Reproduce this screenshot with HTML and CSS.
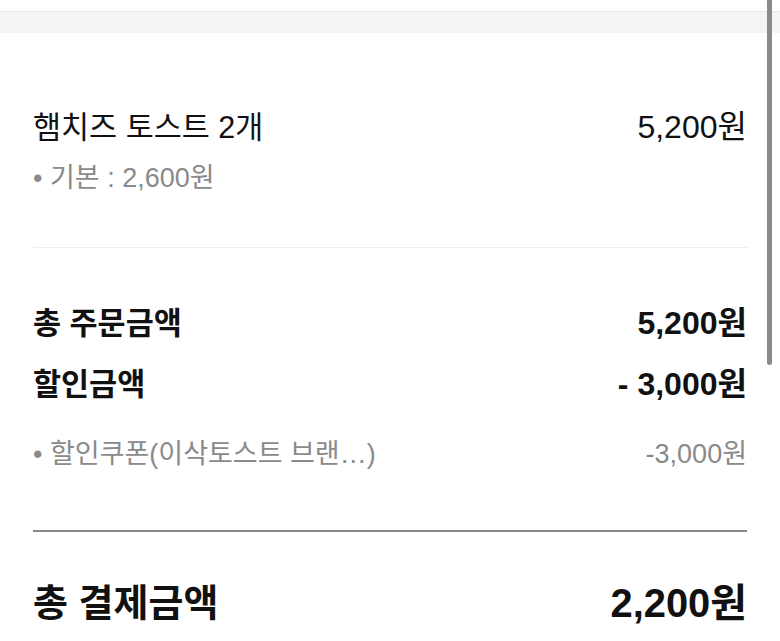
FILE: index.html
```html
<!DOCTYPE html>
<html lang="ko">
<head>
<meta charset="utf-8">
<link rel="stylesheet" href="styles.css">
</head>
<body>
<div class="topbar"></div>
<div class="band"></div>
<main class="content">
  <section class="item">
    <div class="row title-row">
      <span>햄치즈 토스트 2개</span>
      <span class="amt">5,200원</span>
    </div>
    <div class="row sub-row">
      <span>• 기본 : 2,600원</span>
    </div>
  </section>
  <hr class="light">
  <section class="summary">
    <div class="row bold-row first">
      <span>총 주문금액</span>
      <span class="amt">5,200원</span>
    </div>
    <div class="row bold-row second">
      <span>할인금액</span>
      <span class="amt">- 3,000원</span>
    </div>
    <div class="row sub-row coupon">
      <span>• 할인쿠폰(이삭토스트 브랜…)</span>
      <span>-3,000원</span>
    </div>
  </section>
  <hr class="dark">
  <section class="total">
    <div class="row total-row">
      <span>총 결제금액</span>
      <span class="amt">2,200원</span>
    </div>
  </section>
</main>
<div class="scrollbar"></div>
</body>
</html>
```

FILE: styles.css
```css
html, body {
  margin: 0;
  padding: 0;
  background: #fff;
  overflow: hidden;
}
body {
  width: 780px;
  height: 641px;
  position: relative;
  font-family: "Liberation Sans", "Noto Sans CJK KR", sans-serif;
  color: #111;
}
.topbar {
  height: 11px;
  background: #fff;
  border-bottom: 1px solid #e4e4e4;
}
.band {
  height: 21px;
  background: #f4f4f4;
}
.content {
  padding: 0 33px;
}
.row {
  display: flex;
  justify-content: space-between;
  align-items: center;
  white-space: nowrap;
}
.item {
  padding-top: 74px;
}
.title-row {
  font-size: 30.5px;
  line-height: 40px;
}
.amt {
  font-size: 1.05em;
}
.sub-row {
  font-size: 27px;
  line-height: 36px;
  color: #8a8a8a;
  margin-top: 13px;
}
hr {
  border: 0;
  margin: 0;
}
hr.light {
  height: 1px;
  background: #eeeeee;
  margin-top: 51px;
}
.bold-row {
  font-size: 30.5px;
  line-height: 40px;
  font-weight: bold;
}
.bold-row.first {
  margin-top: 55px;
}
.bold-row.second {
  margin-top: 21px;
}
.sub-row.coupon {
  margin-top: 32px;
}
hr.dark {
  height: 2px;
  background: #888;
  margin-top: 58px;
}
.total-row {
  margin-top: 47px;
  font-size: 38px;
  line-height: 48px;
  font-weight: bold;
}
.scrollbar {
  position: absolute;
  top: 0;
  left: 767px;
  width: 5px;
  height: 365px;
  background: #8a8a8a;
  border-radius: 0 0 3px 3px;
}
```
